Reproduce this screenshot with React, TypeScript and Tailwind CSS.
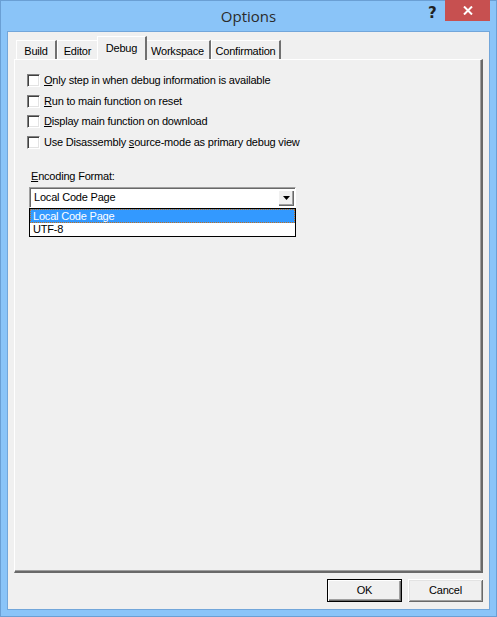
import React from "react";

const font = { fontFamily: '"Liberation Sans", Arial, sans-serif' };

function Tab({ label, selected, w }: { label: string; selected?: boolean; w: number }) {
  if (selected) {
    return (
      <div
        className="relative z-10 -mb-[1px] h-[24px] bg-[#f0f0f0] border-t border-l border-white border-r-2 border-r-[#707070] flex items-start justify-center pt-[3px] text-[11px] tracking-[-0.2px] text-black -mx-[2px]"
        style={{ width: w + 4 }}
      >
        {label}
      </div>
    );
  }
  return (
    <div
      className="h-[19px] bg-[#f0f0f0] border-t border-l border-white border-r-2 border-r-[#707070] flex items-start justify-center pt-[2px] text-[11px] tracking-[-0.2px] text-black"
      style={{ width: w }}
    >
      {label}
    </div>
  );
}

function Check({ children, mt }: { children: React.ReactNode; mt: string }) {
  return (
    <div className={"flex items-center h-[13px] gap-[4px] " + mt}>
      <div className="w-[13px] h-[13px] bg-white border-t border-l border-[#808080] border-r border-b border-r-white border-b-white shadow-[inset_1px_1px_0_#404040,inset_-1px_-1px_0_#e3e3e3]" />
      <span className="text-[11px] tracking-[-0.2px] text-black leading-none">{children}</span>
    </div>
  );
}

function Btn({ label, def }: { label: string; def?: boolean }) {
  return (
    <div
      className={
        "w-[75px] h-[23px] bg-[#f0f0f0] flex items-center justify-center text-[11px] tracking-[-0.2px] text-black " +
        (def
          ? "border border-black shadow-[inset_1px_1px_0_#ffffff,inset_-1px_-1px_0_#696969,inset_-2px_-2px_0_#a0a0a0]"
          : "shadow-[inset_1px_1px_0_#ffffff,inset_-1px_-1px_0_#696969,inset_2px_2px_0_#e3e3e3,inset_-2px_-2px_0_#a0a0a0]")
      }
    >
      {label}
    </div>
  );
}

export default function App() {
  return (
    <div
      className="w-[497px] h-[617px] bg-[#8ac4f8] border border-[#6a9fd4] flex flex-col"
      style={font}
    >
      {/* title bar */}
      <div className="relative h-[30px] flex items-center justify-center shrink-0">
        <span className="text-[15px] text-[#2b2b2b] pt-[1px]" style={{ fontFamily: '"Open Sans", "Noto Sans", sans-serif' }}>
          Options
        </span>
        <span className="absolute left-[427px] top-[1px] text-[15px] font-bold text-[#222]" style={{ fontFamily: '"DejaVu Sans", sans-serif' }}>
          ?
        </span>
        <div className="absolute left-[444px] top-[-1px] w-[45px] h-[21px] bg-[#c75050] flex items-center justify-center">
          <svg width="10" height="9" viewBox="0 0 10 9">
            <path d="M1 0.5 L9 8.5 M9 0.5 L1 8.5" stroke="white" strokeWidth="2" />
          </svg>
        </div>
      </div>
      {/* client */}
      <div className="mx-[6px] h-[579px] bg-[#f0f0f0] border border-[#72a6da] flex flex-col">
        <div className="pt-[4px] px-[6px] flex flex-col">
          {/* tabs */}
          <div className="flex items-end h-[23px] pl-[2px]">
            <Tab label="Build" w={41} />
            <Tab label="Editor" w={42} />
            <Tab label="Debug" selected w={46} />
            <Tab label="Workspace" w={66} />
            <Tab label="Confirmation" w={70} />
          </div>
          {/* panel */}
          <div className="h-[514px] border-t border-l border-white border-r-2 border-b-2 border-r-[#696969] border-b-[#696969] shadow-[inset_-1px_-1px_0_#a0a0a0] relative">
            <div className="pl-[12px] pt-[14px] flex flex-col">
              <Check mt="mt-0"><u>O</u>nly step in when debug information is available</Check>
              <Check mt="mt-[8px]"><u>R</u>un to main function on reset</Check>
              <Check mt="mt-[7px]"><u>D</u>isplay main function on download</Check>
              <Check mt="mt-[8px]">Use Disassembly <u>s</u>ource-mode as primary debug view</Check>
            </div>
            <div className="pl-[16px] pt-[22px] text-[11px] tracking-[-0.2px] text-black leading-none">
              <u>E</u>ncoding Format:
            </div>
            <div className="ml-[14px] mt-[5px] w-[267px] relative">
              <div className="h-[21px] bg-white border-t border-l border-[#a0a0a0] border-r border-b border-r-white border-b-white shadow-[inset_1px_1px_0_#696969] flex items-center justify-between">
                <span className="pl-[4px] text-[11px] tracking-[-0.2px] text-black">Local Code Page</span>
                <div className="w-[16px] h-[16px] mr-[1px] bg-[#f0f0f0] shadow-[inset_1px_1px_0_#ffffff,inset_-1px_-1px_0_#696969,inset_-2px_-2px_0_#a0a0a0] flex items-center justify-center">
                  <svg width="7" height="4" viewBox="0 0 7 4">
                    <path d="M0 0 H7 L3.5 4 Z" fill="black" />
                  </svg>
                </div>
              </div>
              <div className="h-[29px] bg-white border border-black flex flex-col">
                <div className="h-[14px] bg-[#3399ff] border border-dotted border-[#c07020] text-white text-[11px] tracking-[-0.2px] leading-[12px] pl-[2px]">
                  Local Code Page
                </div>
                <div className="h-[13px] text-[11px] tracking-[-0.2px] leading-[13px] pl-[3px] text-black">UTF-8</div>
              </div>
            </div>
          </div>
          {/* buttons */}
          <div className="flex justify-end gap-[6px] pt-[6px]">
            <Btn label="OK" def />
            <Btn label="Cancel" />
          </div>
        </div>
      </div>
    </div>
  );
}
